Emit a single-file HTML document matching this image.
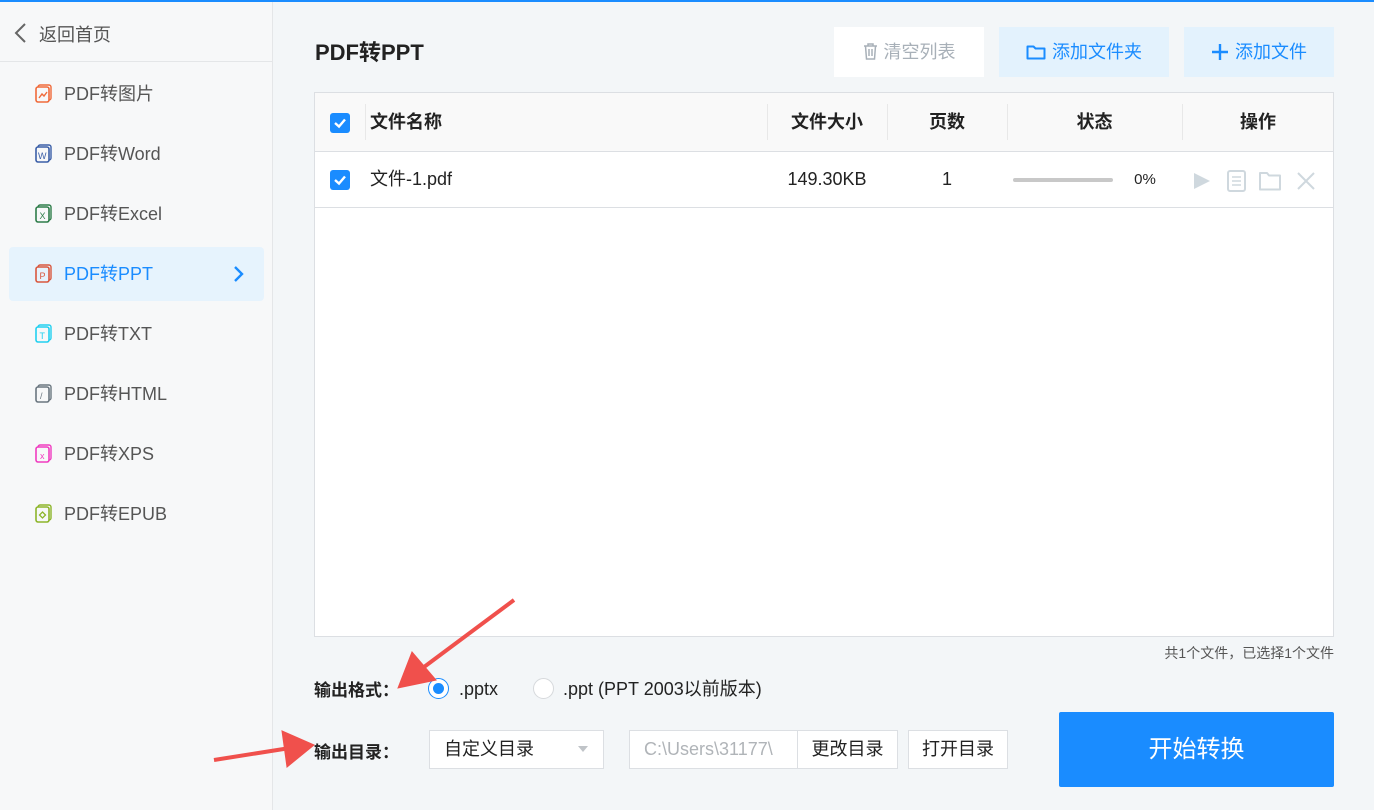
<!DOCTYPE html>
<html><head><meta charset="utf-8"><style>
*{margin:0;padding:0;box-sizing:border-box}
body{width:1374px;height:810px;overflow:hidden;background:#f3f6f8;font-family:"Liberation Sans","Noto Sans CJK SC",sans-serif;position:relative;color:#333}
.a{position:absolute}
.top{left:0;top:0;width:1374px;height:2px;background:#1a8cff}
.side{left:0;top:2px;width:273px;height:808px;background:#f7f8f9;border-right:1px solid #e4e6e8}
.item{position:absolute;left:64px;font-size:18px;color:#555;line-height:24px}
.ico{position:absolute;left:35px;width:18px;height:20px}
.btn{position:absolute;top:27px;height:50px;font-size:18px;line-height:50px;text-align:center}
.th{position:absolute;top:92px;height:60px;line-height:60px;font-size:18px;font-weight:bold;color:#222;text-align:center}
.td{position:absolute;top:152px;height:55px;line-height:55px;font-size:18px;color:#222;text-align:center}
.cb{position:absolute;left:330px;width:20px;height:20px;background:#1a8cff;border-radius:3px}
.vd{position:absolute;top:104px;width:1px;height:36px;background:#e8e8e8}
.box{position:absolute;top:730px;height:39px;background:#fff;border:1px solid #dcdfe3;font-size:18px;line-height:37px}
</style></head><body>
<div class="a top"></div>
<div class="a side">
 <svg class="a" style="left:13px;top:20px" width="14" height="22" viewBox="0 0 14 22"><path d="M12 2 L3 11 L12 20" stroke="#666" stroke-width="2" fill="none"/></svg>
 <div class="a" style="left:39px;top:19px;font-size:18px;color:#555">返回首页</div>
 <div class="a" style="left:0;top:59px;width:273px;height:1px;background:#e4e6e8"></div>
 <div class="a" style="left:9px;top:245px;width:255px;height:54px;background:#e6f3fd;border-radius:4px"></div>
</div>
<svg class="ico" style="top:84px" viewBox="0 0 18 20"><rect x="3" y="1" width="13" height="15" rx="2" fill="none" stroke="#f06a3a" stroke-width="1.4"/><rect x="1" y="3" width="13" height="15" rx="2" fill="#f7f8f9" stroke="#f06a3a" stroke-width="1.6"/><path d="M4 14 L7 10 L9 12 L12 8" stroke="#f06a3a" stroke-width="1.4" fill="none"/></svg>
<div class="item" style="top:82px">PDF转图片</div>
<svg class="ico" style="top:144px" viewBox="0 0 18 20"><rect x="3" y="1" width="13" height="15" rx="2" fill="none" stroke="#3b5fa8" stroke-width="1.4"/><rect x="1" y="3" width="13" height="15" rx="2" fill="#f7f8f9" stroke="#3b5fa8" stroke-width="1.6"/><text x="3" y="15" font-size="9" fill="#3b5fa8" font-family="Liberation Sans">W</text></svg>
<div class="item" style="top:142px">PDF转Word</div>
<svg class="ico" style="top:204px" viewBox="0 0 18 20"><rect x="3" y="1" width="13" height="15" rx="2" fill="none" stroke="#2e7d4a" stroke-width="1.4"/><rect x="1" y="3" width="13" height="15" rx="2" fill="#f7f8f9" stroke="#2e7d4a" stroke-width="1.6"/><text x="4.5" y="15" font-size="9" fill="#2e7d4a" font-family="Liberation Sans">X</text></svg>
<div class="item" style="top:202px">PDF转Excel</div>
<svg class="ico" style="top:264px" viewBox="0 0 18 20"><rect x="3" y="1" width="13" height="15" rx="2" fill="none" stroke="#d9573e" stroke-width="1.4"/><rect x="1" y="3" width="13" height="15" rx="2" fill="#e6f3fd" stroke="#d9573e" stroke-width="1.6"/><text x="4.5" y="15" font-size="9" fill="#d9573e" font-family="Liberation Sans">P</text></svg>
<div class="item" style="top:262px;color:#1a8cff">PDF转PPT</div>
<svg class="a" style="left:232px;top:265px" width="12" height="18" viewBox="0 0 12 18"><path d="M3 2 L10 9 L3 16" stroke="#1a8cff" stroke-width="2.4" fill="none"/></svg>
<svg class="ico" style="top:324px" viewBox="0 0 18 20"><rect x="3" y="1" width="13" height="15" rx="2" fill="none" stroke="#22d0f0" stroke-width="1.4"/><rect x="1" y="3" width="13" height="15" rx="2" fill="#f7f8f9" stroke="#22d0f0" stroke-width="1.6"/><text x="4.5" y="15" font-size="9" fill="#22d0f0" font-family="Liberation Sans">T</text></svg>
<div class="item" style="top:322px">PDF转TXT</div>
<svg class="ico" style="top:384px" viewBox="0 0 18 20"><rect x="3" y="1" width="13" height="15" rx="2" fill="none" stroke="#6b7780" stroke-width="1.4"/><rect x="1" y="3" width="13" height="15" rx="2" fill="#f7f8f9" stroke="#6b7780" stroke-width="1.6"/><text x="5" y="15" font-size="9" fill="#6b7780" font-family="Liberation Sans">/</text></svg>
<div class="item" style="top:382px">PDF转HTML</div>
<svg class="ico" style="top:444px" viewBox="0 0 18 20"><rect x="3" y="1" width="13" height="15" rx="2" fill="none" stroke="#f03cc0" stroke-width="1.4"/><rect x="1" y="3" width="13" height="15" rx="2" fill="#f7f8f9" stroke="#f03cc0" stroke-width="1.6"/><text x="5" y="15" font-size="9" fill="#f03cc0" font-family="Liberation Sans">x</text></svg>
<div class="item" style="top:442px">PDF转XPS</div>
<svg class="ico" style="top:504px" viewBox="0 0 18 20"><rect x="3" y="1" width="13" height="15" rx="2" fill="none" stroke="#8db52a" stroke-width="1.4"/><rect x="1" y="3" width="13" height="15" rx="2" fill="#f7f8f9" stroke="#8db52a" stroke-width="1.6"/><path d="M7.5 8 L10.5 11 L7.5 14 L4.5 11Z" stroke="#8db52a" stroke-width="1.3" fill="none"/></svg>
<div class="item" style="top:502px">PDF转EPUB</div>

<div class="a" style="left:315px;top:35px;font-size:22px;font-weight:bold;color:#222">PDF转PPT</div>
<div class="btn" style="left:834px;width:150px;background:#fff;color:#a8b0b8"><svg width="15" height="17" viewBox="0 0 15 17" style="vertical-align:-2px;margin-right:6px"><path d="M1 3h13M5 3V1h5v2M2.5 3l1 13h8l1-13M6 6v7M9 6v7" stroke="#a8b0b8" stroke-width="1.5" fill="none"/></svg>清空列表</div>
<div class="btn" style="left:999px;width:170px;background:#e3f2fd;color:#1a8cff"><svg width="20" height="16" viewBox="0 0 20 16" style="vertical-align:-2px;margin-right:6px"><path d="M1.5 2.5h6l2 2h9v10h-17z" stroke="#1a8cff" stroke-width="2" fill="none" stroke-linejoin="round"/></svg>添加文件夹</div>
<div class="btn" style="left:1184px;width:150px;background:#e3f2fd;color:#1a8cff"><svg width="18" height="18" viewBox="0 0 18 18" style="vertical-align:-3px;margin-right:6px"><path d="M9 1v16M1 9h16" stroke="#1a8cff" stroke-width="2.4"/></svg>添加文件</div>

<div class="a" style="left:314px;top:92px;width:1020px;height:545px;background:#fff;border:1px solid #dcdfe3"></div>
<div class="a" style="left:315px;top:93px;width:1018px;height:59px;background:#f9f9f9;border-bottom:1px solid #dcdfe3"></div>
<div class="a" style="left:315px;top:207px;width:1018px;height:1px;background:#dcdfe3"></div>
<div class="vd" style="left:365px"></div><div class="vd" style="left:767px"></div><div class="vd" style="left:887px"></div><div class="vd" style="left:1007px"></div><div class="vd" style="left:1182px"></div>
<div class="cb" style="top:113px"><svg width="20" height="20"><path d="M5 10l4 3.5 6-7" stroke="#fff" stroke-width="2.4" fill="none"/></svg></div>
<div class="cb" style="top:170px"><svg width="20" height="20"><path d="M5 10l4 3.5 6-7" stroke="#fff" stroke-width="2.4" fill="none"/></svg></div>
<div class="th" style="left:370px;text-align:left">文件名称</div>
<div class="th" style="left:767px;width:120px">文件大小</div>
<div class="th" style="left:887px;width:120px">页数</div>
<div class="th" style="left:1007px;width:175px">状态</div>
<div class="th" style="left:1182px;width:152px">操作</div>
<div class="td" style="left:370px;text-align:left">文件-1.pdf</div>
<div class="td" style="left:767px;width:120px">149.30KB</div>
<div class="td" style="left:887px;width:120px">1</div>
<div class="a" style="left:1013px;top:178px;width:100px;height:4px;border-radius:2px;background:#c8c8c8"></div>
<div class="td" style="left:1120px;width:50px;font-size:15px">0%</div>
<svg class="a" style="left:1192px;top:170px" width="140" height="22" viewBox="0 0 140 22"><path d="M2 3l16 8-16 8z" fill="#cfd8de"/><rect x="36" y="1" width="17" height="20" rx="2" fill="none" stroke="#cfd8de" stroke-width="2"/><path d="M40 7h9M40 11h9M40 15h9" stroke="#cfd8de" stroke-width="1.6"/><path d="M68 3h7l2 2.5h11v14H68z" fill="none" stroke="#cfd8de" stroke-width="2" stroke-linejoin="round"/><path d="M106 3l16 16M122 3l-16 16" stroke="#cfd8de" stroke-width="2"/></svg>

<div class="a" style="left:1000px;top:643px;width:334px;text-align:right;font-size:14px;color:#555">共1个文件，已选择1个文件</div>
<div class="a" style="left:314px;top:676px;font-size:17px;font-weight:bold;color:#222">输出格式：</div>
<div class="a" style="left:428px;top:678px;width:21px;height:21px;border-radius:50%;border:1px solid #1a8cff;background:#fff"><div class="a" style="left:4px;top:4px;width:11px;height:11px;border-radius:50%;background:#1a8cff"></div></div>
<div class="a" style="left:459px;top:677px;font-size:18px;color:#222;line-height:24px">.pptx</div>
<div class="a" style="left:533px;top:678px;width:21px;height:21px;border-radius:50%;border:1px solid #d6d9dc;background:#fff"></div>
<div class="a" style="left:563px;top:677px;font-size:18px;color:#222;line-height:24px">.ppt (PPT 2003以前版本)</div>
<div class="a" style="left:314px;top:738px;font-size:17px;font-weight:bold;color:#222">输出目录：</div>
<div class="box" style="left:429px;width:175px;padding-left:14px;color:#222">自定义目录<svg class="a" style="left:148px;top:15px" width="10" height="7"><path d="M0 0h10L5 6z" fill="#c0c4c8"/></svg></div>
<div class="box" style="left:629px;width:169px;padding-left:14px;color:#b0b4b8;overflow:hidden;white-space:nowrap">C:\Users\31177\</div>
<div class="box" style="left:797px;width:101px;text-align:center;color:#222">更改目录</div>
<div class="box" style="left:908px;width:100px;text-align:center;color:#222">打开目录</div>
<div class="a" style="left:1059px;top:712px;width:275px;height:75px;background:#1a8cff;border-radius:2px;color:#fff;font-size:24px;line-height:75px;text-align:center">开始转换</div>

<svg class="a" style="left:0;top:0" width="1374" height="810"><g fill="#f0504c" stroke="#f0504c">
<path d="M514 600 L420 670" stroke-width="4"/><path d="M398 688 L412 652 L436 680 Z"/>
<path d="M214 760 L290 748" stroke-width="4"/><path d="M314 745 L282 731 L287 767 Z"/>
</g></svg>
</body></html>
